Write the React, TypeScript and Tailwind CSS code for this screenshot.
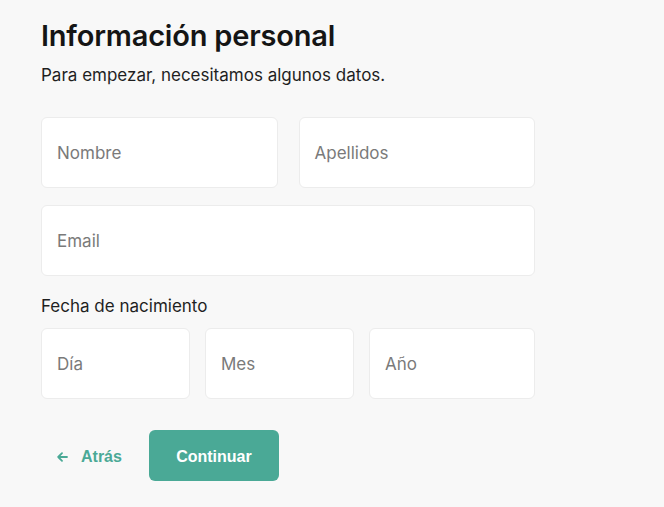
import React from "react";

function Field({ label, className = "" }: { label: string; className?: string }) {
  return (
    <div
      className={`h-[71px] bg-white border border-[#ececec] rounded-[6px] flex items-center pl-[15px] pt-[3px] text-[17px] text-[#7a7a7a] ${className}`}
    >
      {label}
    </div>
  );
}

export default function App() {
  return (
    <div
      className="min-h-[507px] w-full bg-[#f8f8f8] text-[#1a1a1a]"
      style={{ fontFamily: "Inter, 'Noto Sans', sans-serif" }}
    >
      <div className="pl-[41px] pt-[18px] w-[535px]">
        <h1 className="text-[29px] leading-[36px] font-semibold tracking-[-0.2px] text-[#151515]">
          Información personal
        </h1>
        <p className="mt-[9px] text-[17px] leading-[24px] text-[#1f1f1f]">
          Para empezar, necesitamos algunos datos.
        </p>
        <div className="mt-[30px] grid grid-cols-2 gap-[21px]">
          <Field label="Nombre" />
          <Field label="Apellidos" />
        </div>
        <div className="mt-[17px]">
          <Field label="Email" />
        </div>
        <div className="mt-[18px] mb-[-1px] text-[17px] leading-[24px] text-[#1f1f1f]">Fecha de nacimiento</div>
        <div className="mt-[11px] grid grid-cols-[149px_149px_1fr] gap-[15px]">
          <Field label="Día" />
          <Field label="Mes" />
          <Field label="Año" />
        </div>
        <div
          className="mt-[31px] flex items-center"
          style={{ fontFamily: "'Liberation Sans', Arial, sans-serif" }}
        >
          <button className="flex items-center gap-[13px] pl-[16px] pr-[27px] pt-[2px] h-[51px] text-[16px] font-bold text-[#4aa996]">
            <svg width="11" height="12" viewBox="0 0 11 12" fill="none" stroke="#4aa996" strokeWidth="1.8" strokeLinecap="round" strokeLinejoin="round">
              <path d="M10 6H1.2M5 2.2L1.2 6 5 9.8" />
            </svg>
            Atrás
          </button>
          <button className="h-[51px] w-[130px] pt-[2px] rounded-[6px] bg-[#4aa996] text-white text-[16px] font-bold">
            Continuar
          </button>
        </div>
      </div>
    </div>
  );
}
